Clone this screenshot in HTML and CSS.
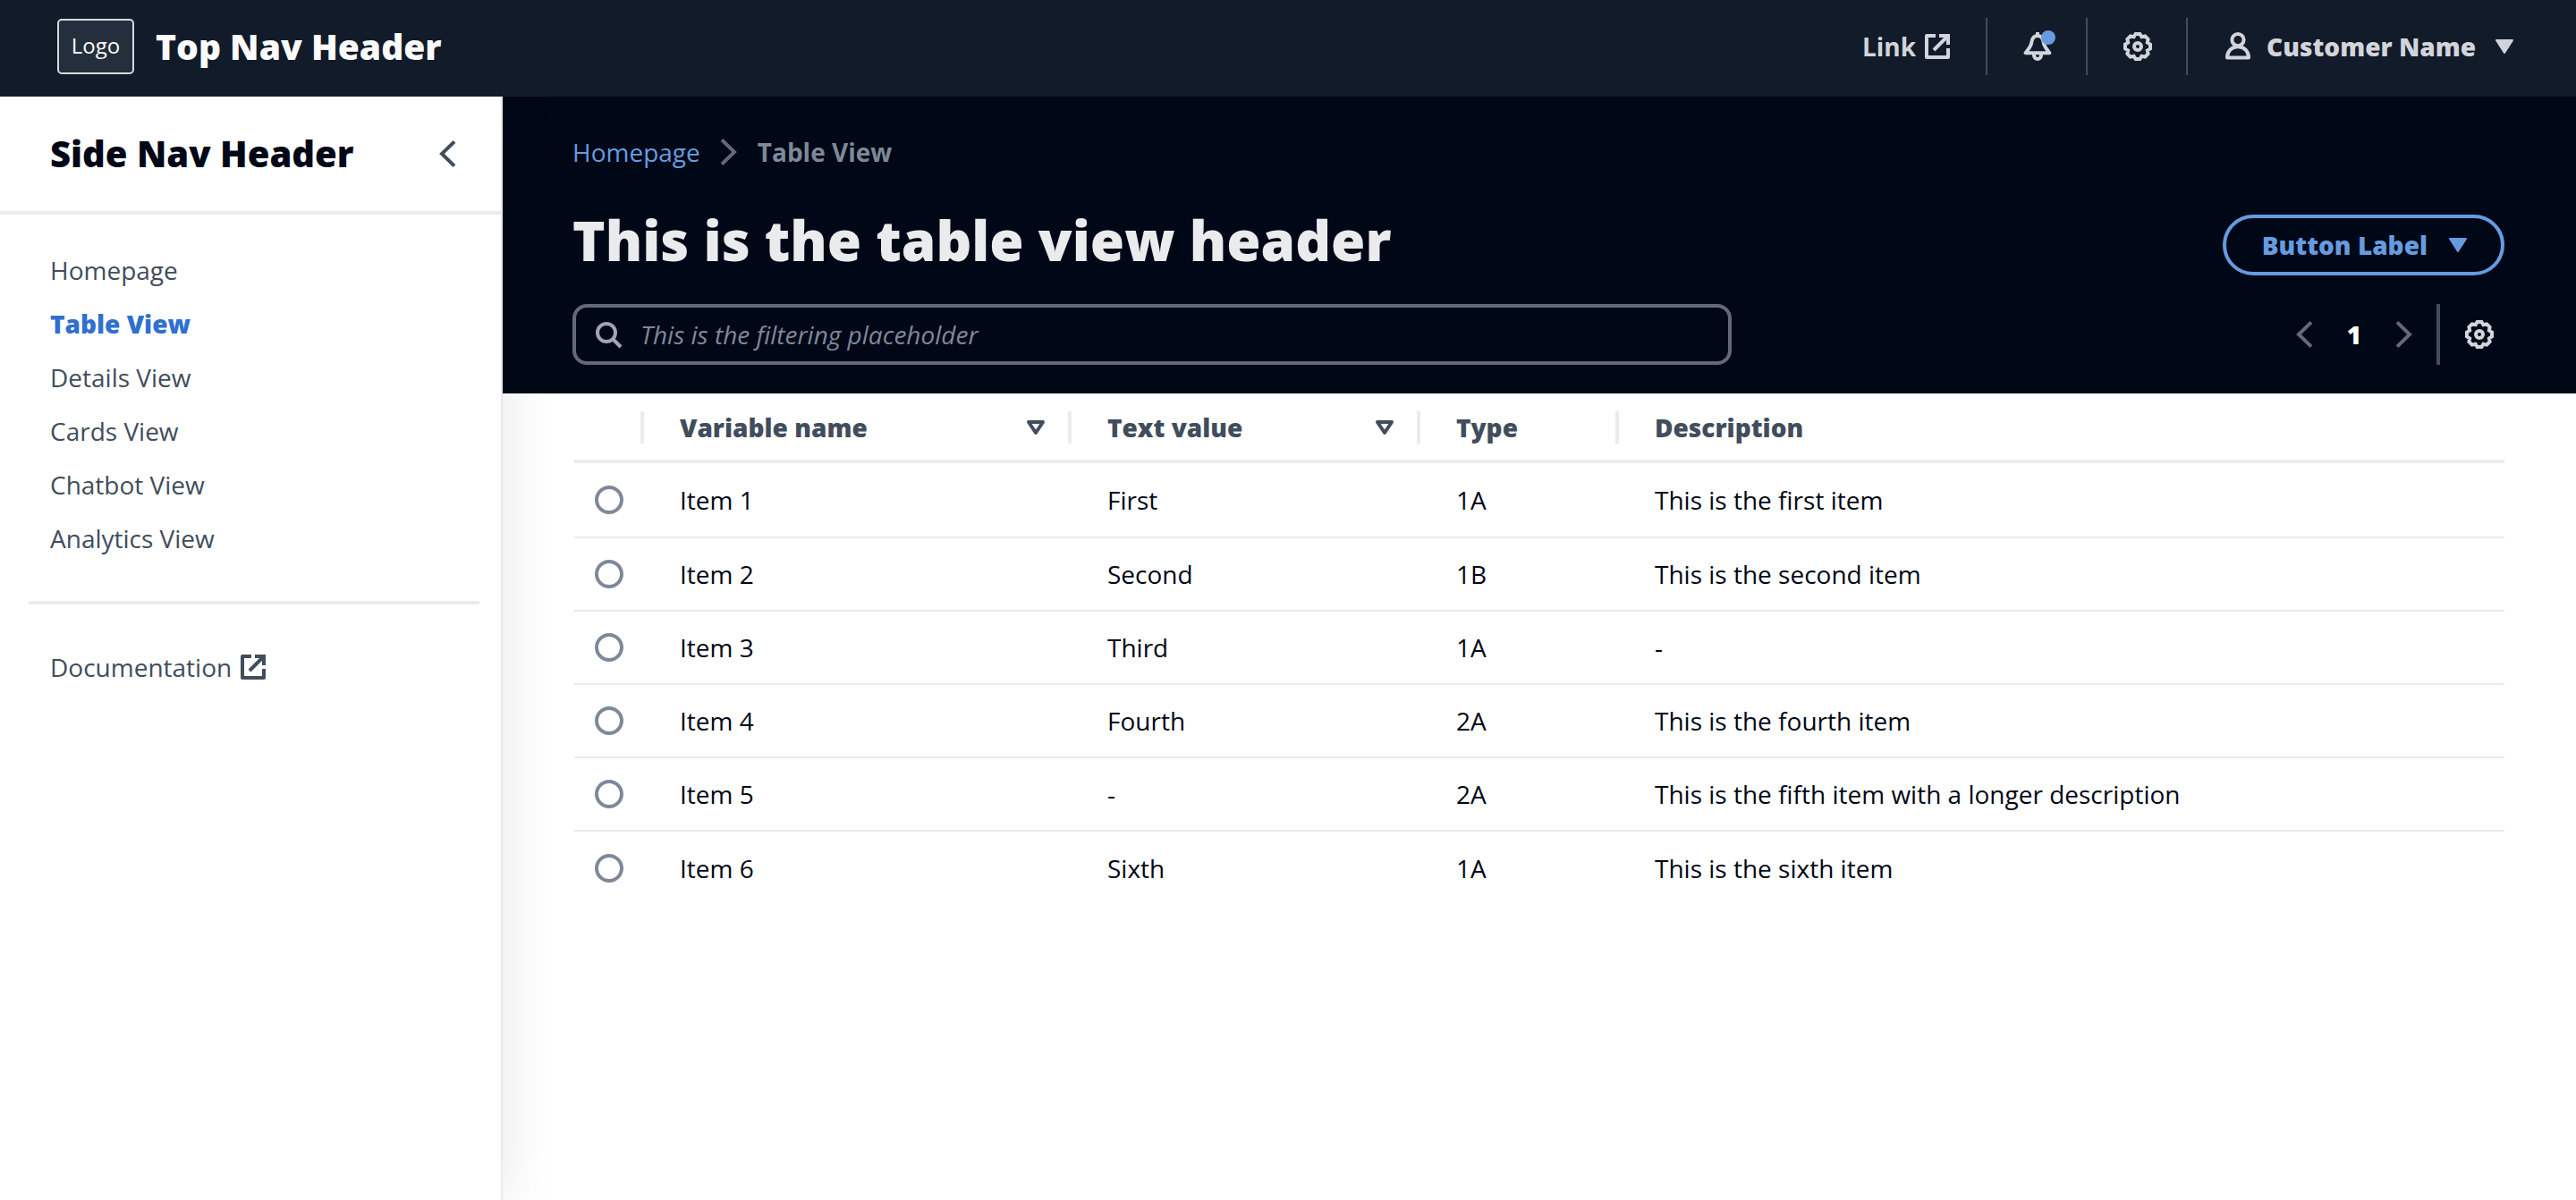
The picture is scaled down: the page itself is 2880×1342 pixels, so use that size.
FILE: index.html
```html
<!DOCTYPE html>
<html lang="en">
<head>
<meta charset="utf-8">
<title>Table View</title>
<link rel="stylesheet" href="styles.css">
</head>
<body>
<svg class="defs" aria-hidden="true">
  <symbol id="external" viewBox="0 0 16 16"><path stroke-linejoin="round" d="M7 2H2v12h12V9"/><path d="M9 2h5v5M6 10l8-8"/></symbol>
  <symbol id="gear" viewBox="0 0 16 16"><path d="M6.800 1h2.400L10.200 2.600 12.100 2.200 13.800 3.900 13.400 5.800 15 6.800v2.400L13.400 10.200 13.800 12.100 12.100 13.800 10.200 13.400 9.200 15H6.800L5.800 13.400 3.900 13.800 2.200 12.100 2.600 10.200 1 9.200V6.800L2.600 5.800 2.200 3.900 3.900 2.200 5.800 2.600z"/><circle cx="8" cy="8" r="2"/></symbol>
  <symbol id="left" viewBox="0 0 16 16"><path d="M12 1.200 5 8l7 6.800"/></symbol>
  <symbol id="right" viewBox="0 0 16 16"><path d="M4 1.200 11 8l-7 6.800"/></symbol>
  <symbol id="down" viewBox="0 0 16 16"><path class="solid" d="M3.500 4.500h9L8 11.500z"/></symbol>
  <symbol id="sort" viewBox="0 0 16 16"><path stroke-linejoin="round" d="M4 5h8l-4 6z"/></symbol>
</svg>
<header class="topbar">
  <a class="brand" href="#"><span class="logo">Logo</span><span class="brand-name">Top Nav Header</span></a>
  <nav class="utilities" aria-label="Utilities">
    <a class="utility" href="#">Link<svg class="icon"><use href="#external"/></svg></a>
    <button class="utility" aria-label="Notifications"><svg class="icon" viewBox="0 0 16 16"><path stroke-linejoin="round" d="M8 0v2M8 2C5.800 2 5 3.500 4.700 5.500 4.400 8 3 9.300 1.300 11.600h13.400C13 9.300 11.600 8 11.300 5.500 11 3.500 10.200 2 8 2zM6 12v1a2 2 0 0 0 4 0v-1"/></svg><span class="badge"></span></button>
    <button class="utility" aria-label="Settings"><svg class="icon"><use href="#gear"/></svg></button>
    <button class="utility account"><svg class="icon" viewBox="0 0 16 16"><circle cx="8" cy="4.300" r="3.300"/><path stroke-linejoin="round" d="M2 14.300c0-3.600 2.500-6.200 6-6.200s6 2.600 6 6.200z"/></svg>Customer Name<svg class="icon"><use href="#down"/></svg></button>
  </nav>
</header>
<div class="layout">
  <aside class="sidenav">
    <div class="sidenav-head"><h2>Side Nav Header</h2><button class="plain" aria-label="Close navigation"><svg class="icon"><use href="#left"/></svg></button></div>
    <nav class="sidenav-body" aria-label="Side navigation">
      <ul>
        <li><a href="#">Homepage</a></li>
        <li><a href="#" class="active" aria-current="page">Table View</a></li>
        <li><a href="#">Details View</a></li>
        <li><a href="#">Cards View</a></li>
        <li><a href="#">Chatbot View</a></li>
        <li><a href="#">Analytics View</a></li>
      </ul>
      <hr>
      <ul><li><a href="#">Documentation<svg class="icon"><use href="#external"/></svg></a></li></ul>
    </nav>
  </aside>
  <main>
    <div class="hero">
      <nav class="crumbs" aria-label="Breadcrumbs"><a href="#">Homepage</a><svg class="icon"><use href="#right"/></svg><span>Table View</span></nav>
      <div class="title-row"><h1>This is the table view header</h1><button class="action">Button Label<svg class="icon"><use href="#down"/></svg></button></div>
      <div class="tools">
        <label class="search"><svg class="icon" viewBox="0 0 16 16"><circle cx="7" cy="7" r="5"/><path d="m10.500 10.500 4.500 4.500"/></svg><input type="search" aria-label="Filter items" placeholder="This is the filtering placeholder"></label>
        <div class="pager">
          <button class="plain" aria-label="Previous page"><svg class="icon"><use href="#left"/></svg></button>
          <button class="plain page">1</button>
          <button class="plain" aria-label="Next page"><svg class="icon"><use href="#right"/></svg></button>
          <button class="plain prefs" aria-label="Preferences"><svg class="icon"><use href="#gear"/></svg></button>
        </div>
      </div>
    </div>
    <div class="content">
      <table>
        <colgroup><col class="c-select"><col class="c-name"><col class="c-text"><col class="c-type"><col></colgroup>
        <thead><tr>
          <th scope="col" aria-label="Select"><div class="th"></div></th>
          <th scope="col"><div class="th">Variable name<svg class="icon"><use href="#sort"/></svg></div></th>
          <th scope="col"><div class="th">Text value<svg class="icon"><use href="#sort"/></svg></div></th>
          <th scope="col"><div class="th">Type</div></th>
          <th scope="col"><div class="th">Description</div></th>
        </tr></thead>
        <tbody>
          <tr><td><input type="radio" name="item" aria-label="Item 1"></td><td>Item 1</td><td>First</td><td>1A</td><td>This is the first item</td></tr>
          <tr><td><input type="radio" name="item" aria-label="Item 2"></td><td>Item 2</td><td>Second</td><td>1B</td><td>This is the second item</td></tr>
          <tr><td><input type="radio" name="item" aria-label="Item 3"></td><td>Item 3</td><td>Third</td><td>1A</td><td>-</td></tr>
          <tr><td><input type="radio" name="item" aria-label="Item 4"></td><td>Item 4</td><td>Fourth</td><td>2A</td><td>This is the fourth item</td></tr>
          <tr><td><input type="radio" name="item" aria-label="Item 5"></td><td>Item 5</td><td>-</td><td>2A</td><td>This is the fifth item with a longer description</td></tr>
          <tr><td><input type="radio" name="item" aria-label="Item 6"></td><td>Item 6</td><td>Sixth</td><td>1A</td><td>This is the sixth item</td></tr>
        </tbody>
      </table>
    </div>
  </main>
</div>
</body>
</html>
```
FILE: styles.css
```css
* { box-sizing: border-box; }
body {
  margin: 0;
  min-height: 100vh;
  display: flex;
  flex-direction: column;
  background: #fff;
  color: #000716;
  font: 28px/40px "Open Sans", sans-serif;
}
h1, h2, ul { margin: 0; padding: 0; }
ul { list-style: none; }
a { color: inherit; text-decoration: none; }
button { font: inherit; color: inherit; background: none; border: 0; padding: 0; cursor: pointer; }
.defs { display: none; }
.icon {
  width: 32px;
  height: 32px;
  flex: none;
  display: block;
  fill: none;
  stroke: currentColor;
  stroke-width: 2;
}
.solid { fill: currentColor; stroke-width: 1; stroke-linejoin: round; }

.topbar {
  padding: 20px 64px 24px;
  display: flex;
  align-items: center;
  justify-content: space-between;
  background: #121b29;
  color: #d1d5db;
}
.brand { display: flex; align-items: center; gap: 24px; color: #fbfbfb; }
.logo {
  width: 86px;
  height: 62px;
  padding-bottom: 2px;
  display: grid;
  place-items: center;
  border: 2px solid #d5dbdb;
  border-radius: 5px;
  background: #252e3d;
  font-size: 24px;
  font-weight: 500;
}
.brand-name { font-size: 39px; font-weight: 800; }
.utilities { display: flex; align-items: center; font-weight: 700; }
.utility { position: relative; height: 64px; padding: 0 38px 0 40px; display: flex; align-items: center; gap: 8px; }
.utility + .utility { border-left: 2px solid #414d5c; }
.account { padding-right: 0; gap: 16px; font-weight: 800; }
.badge { position: absolute; top: 14px; right: 34px; width: 16px; height: 16px; border-radius: 50%; background: #659ce0; }

.layout { flex: 1; display: flex; }
.sidenav {
  position: relative;
  width: 562px;
  flex: none;
  background: #fff;
  color: #414d5c;
  border-right: 2px solid #e9ebed;
  box-shadow: 0 0 60px rgba(0, 7, 22, 0.1);
  clip-path: inset(0 -80px 0 0);
}
.sidenav-head {
  padding: 40px 44px 40px 56px;
  display: flex;
  align-items: center;
  justify-content: space-between;
  border-bottom: 4px solid #e9ebed;
}
.sidenav-head h2 { color: #000716; font-size: 40px; line-height: 48px; font-weight: 800; }
.sidenav-body { padding: 32px 24px 0 32px; }
.sidenav-body li { padding: 10px 24px; }
.sidenav-body a { display: flex; align-items: center; gap: 8px; }
.sidenav-body .active { color: #3070cf; font-weight: 800; }
.sidenav-body hr { margin: 40px 0; border: 0; border-top: 4px solid #e9ebed; }

main { flex: 1; min-width: 0; }
.hero { padding: 42px 80px 32px 78px; background: #000716; color: #e9ebed; }
.crumbs { display: flex; align-items: center; gap: 16px; color: #7d8998; font-weight: 700; }
.crumbs .icon { color: #5f6b7a; }
.crumbs a { color: #659ce0; font-weight: 400; }
.title-row { margin: 38px 0 32px; display: flex; align-items: flex-end; justify-content: space-between; }
h1 { font-size: 62px; line-height: 80px; font-weight: 800; }
.action {
  height: 68px;
  padding: 0 32px 0 40px;
  display: flex;
  align-items: center;
  gap: 18px;
  border: 4px solid #659ce0;
  border-radius: 34px;
  color: #659ce0;
  font-weight: 800;
}
.tools { display: flex; justify-content: space-between; }
.search {
  flex: 0 1 1296px;
  height: 68px;
  padding: 0 20px;
  display: flex;
  align-items: center;
  gap: 20px;
  border: 4px solid #5f6b7a;
  border-radius: 16px;
  color: #9ba7b6;
}
.search input { flex: 1; min-width: 0; padding: 0; border: 0; outline: 0; background: none; color: #e9ebed; font: inherit; }
.search input::placeholder { color: #7d8998; font-style: italic; opacity: 1; }
.pager { display: flex; align-items: center; color: #5f6b7a; }
.page { width: 80px; color: #fff; font-weight: 800; }
.prefs { height: 68px; margin-left: 20px; padding: 0 12px 0 28px; border-left: 4px solid #414d5c; color: #d1d5db; }

.content { padding: 0 80px; }
table { width: 100%; border-collapse: separate; border-spacing: 0; table-layout: fixed; }
.c-select { width: 78px; }
.c-name { width: 478px; }
.c-text { width: 390px; }
.c-type { width: 222px; }
th, td { padding: 0; text-align: left; border-bottom: 2px solid #e9ebed; }
th { padding: 20px 0 18px; border-bottom-width: 4px; color: #414d5c; font-weight: 800; }
.th { height: 36px; padding: 0 20px 0 40px; display: flex; align-items: center; justify-content: space-between; border-right: 4px solid #e9ebed; }
th:last-child .th { border: 0; }
td { height: 82px; padding-left: 40px; }
tbody tr:first-child td { height: 84px; }
td:first-child { padding-left: 23px; }
tbody tr:last-child td { border: 0; }
input[type="radio"] { appearance: none; display: block; width: 32px; height: 32px; margin: 0; border: 4px solid #7d8998; border-radius: 50%; background: #fff; }
input[type="radio"]:checked { border: 10px solid #3070cf; }
```
